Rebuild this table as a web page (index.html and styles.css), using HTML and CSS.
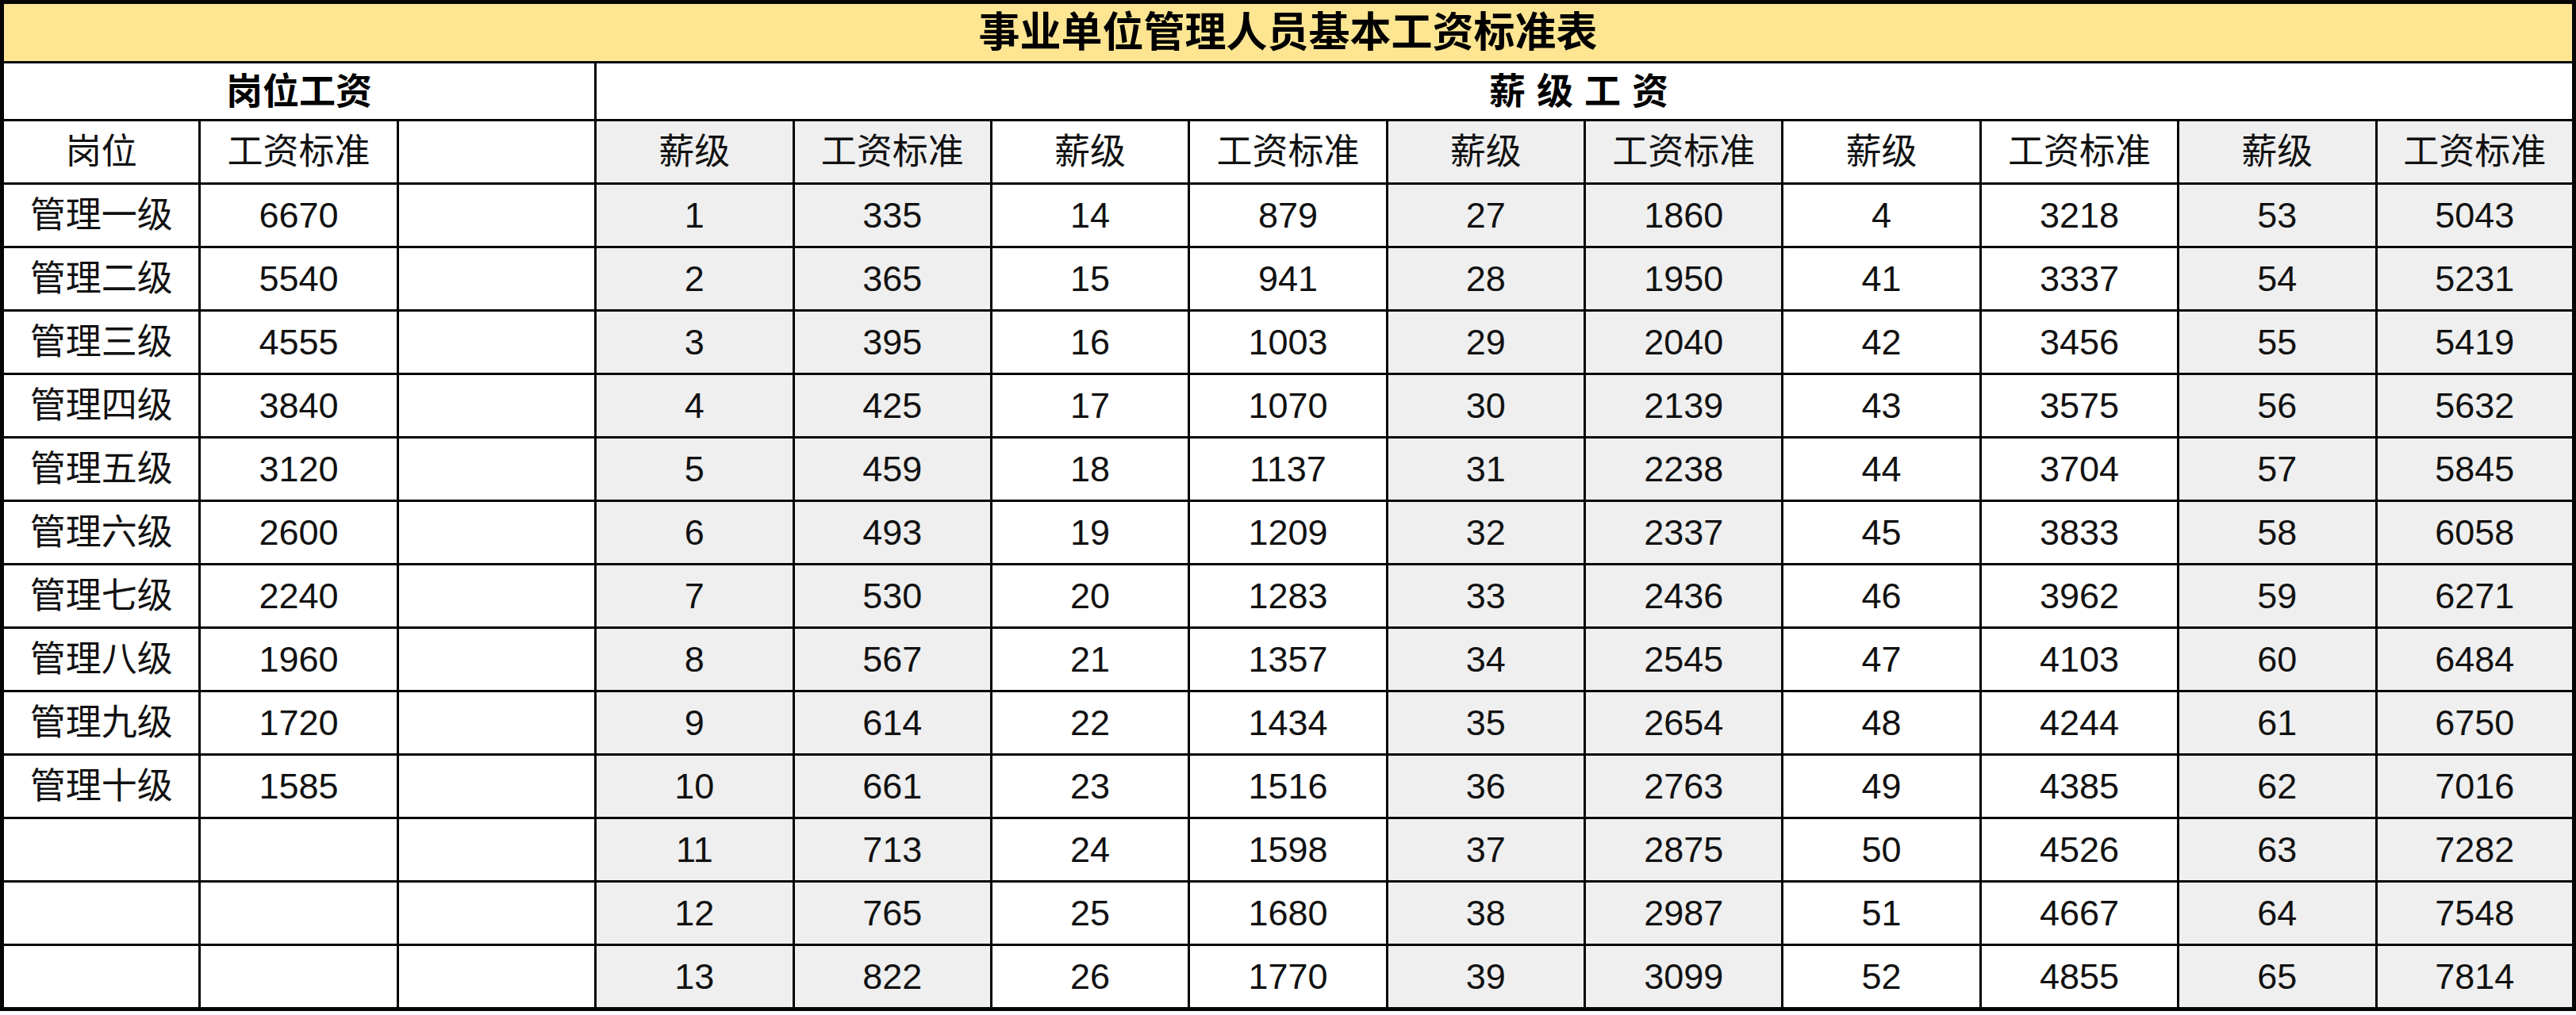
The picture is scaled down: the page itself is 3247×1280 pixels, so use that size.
FILE: index.html
```html
<!DOCTYPE html>
<html lang="zh-CN">
<head>
<meta charset="utf-8">
<title>事业单位管理人员基本工资标准表</title>
<link rel="stylesheet" href="styles.css">
</head>
<body>
<table class="sheet">
  <colgroup>
    <col class="c"><col class="c"><col class="c">
    <col class="c g"><col class="c g">
    <col class="c"><col class="c">
    <col class="c g"><col class="c g">
    <col class="c"><col class="c">
    <col class="c g"><col class="c g">
  </colgroup>
  <tr class="r-title"><td class="title" colspan="13">事业单位管理人员基本工资标准表</td></tr>
  <tr class="r-h1"><td class="group" colspan="3">岗位工资</td><td class="group spaced" colspan="10">薪级工资</td></tr>
  <tr class="r-h2">
    <td>岗位</td><td>工资标准</td><td></td>
    <td class="g">薪级</td><td class="g">工资标准</td>
    <td>薪级</td><td>工资标准</td>
    <td class="g">薪级</td><td class="g">工资标准</td>
    <td>薪级</td><td>工资标准</td>
    <td class="g">薪级</td><td class="g">工资标准</td>
  </tr>
  <tr><td>管理一级</td><td>6670</td><td></td><td class="g">1</td><td class="g">335</td><td>14</td><td>879</td><td class="g">27</td><td class="g">1860</td><td>4</td><td>3218</td><td class="g">53</td><td class="g">5043</td></tr>
  <tr><td>管理二级</td><td>5540</td><td></td><td class="g">2</td><td class="g">365</td><td>15</td><td>941</td><td class="g">28</td><td class="g">1950</td><td>41</td><td>3337</td><td class="g">54</td><td class="g">5231</td></tr>
  <tr><td>管理三级</td><td>4555</td><td></td><td class="g">3</td><td class="g">395</td><td>16</td><td>1003</td><td class="g">29</td><td class="g">2040</td><td>42</td><td>3456</td><td class="g">55</td><td class="g">5419</td></tr>
  <tr><td>管理四级</td><td>3840</td><td></td><td class="g">4</td><td class="g">425</td><td>17</td><td>1070</td><td class="g">30</td><td class="g">2139</td><td>43</td><td>3575</td><td class="g">56</td><td class="g">5632</td></tr>
  <tr><td>管理五级</td><td>3120</td><td></td><td class="g">5</td><td class="g">459</td><td>18</td><td>1137</td><td class="g">31</td><td class="g">2238</td><td>44</td><td>3704</td><td class="g">57</td><td class="g">5845</td></tr>
  <tr><td>管理六级</td><td>2600</td><td></td><td class="g">6</td><td class="g">493</td><td>19</td><td>1209</td><td class="g">32</td><td class="g">2337</td><td>45</td><td>3833</td><td class="g">58</td><td class="g">6058</td></tr>
  <tr><td>管理七级</td><td>2240</td><td></td><td class="g">7</td><td class="g">530</td><td>20</td><td>1283</td><td class="g">33</td><td class="g">2436</td><td>46</td><td>3962</td><td class="g">59</td><td class="g">6271</td></tr>
  <tr><td>管理八级</td><td>1960</td><td></td><td class="g">8</td><td class="g">567</td><td>21</td><td>1357</td><td class="g">34</td><td class="g">2545</td><td>47</td><td>4103</td><td class="g">60</td><td class="g">6484</td></tr>
  <tr><td>管理九级</td><td>1720</td><td></td><td class="g">9</td><td class="g">614</td><td>22</td><td>1434</td><td class="g">35</td><td class="g">2654</td><td>48</td><td>4244</td><td class="g">61</td><td class="g">6750</td></tr>
  <tr><td>管理十级</td><td>1585</td><td></td><td class="g">10</td><td class="g">661</td><td>23</td><td>1516</td><td class="g">36</td><td class="g">2763</td><td>49</td><td>4385</td><td class="g">62</td><td class="g">7016</td></tr>
  <tr><td></td><td></td><td></td><td class="g">11</td><td class="g">713</td><td>24</td><td>1598</td><td class="g">37</td><td class="g">2875</td><td>50</td><td>4526</td><td class="g">63</td><td class="g">7282</td></tr>
  <tr><td></td><td></td><td></td><td class="g">12</td><td class="g">765</td><td>25</td><td>1680</td><td class="g">38</td><td class="g">2987</td><td>51</td><td>4667</td><td class="g">64</td><td class="g">7548</td></tr>
  <tr><td></td><td></td><td></td><td class="g">13</td><td class="g">822</td><td>26</td><td>1770</td><td class="g">39</td><td class="g">3099</td><td>52</td><td>4855</td><td class="g">65</td><td class="g">7814</td></tr>
</table>
</body>
</html>
```

FILE: styles.css
```css
html, body {
  margin: 0;
  padding: 0;
  background: #ffffff;
}

.sheet {
  width: 3247px;
  table-layout: fixed;
  border-collapse: collapse;
  border: 5px solid #050505;
  font-family: "Liberation Sans", "Noto Sans CJK SC", sans-serif;
  font-size: 45px;
  color: #111111;
}

.sheet td {
  border: 3px solid #050505;
  text-align: center;
  vertical-align: middle;
  padding: 0;
  line-height: 1;
  white-space: nowrap;
  overflow: hidden;
}

.sheet td.g {
  background: #efefef;
}

.sheet tr td {
  height: 77px;
}

.sheet .r-title td.title {
  height: 72px;
  background: #fde592;
  font-weight: 700;
  font-size: 52px;
  color: #000000;
}

.sheet .r-h1 td.group {
  height: 70px;
  font-weight: 700;
  font-size: 46px;
  color: #000000;
}

.sheet td.spaced {
  letter-spacing: 14px;
}
```
